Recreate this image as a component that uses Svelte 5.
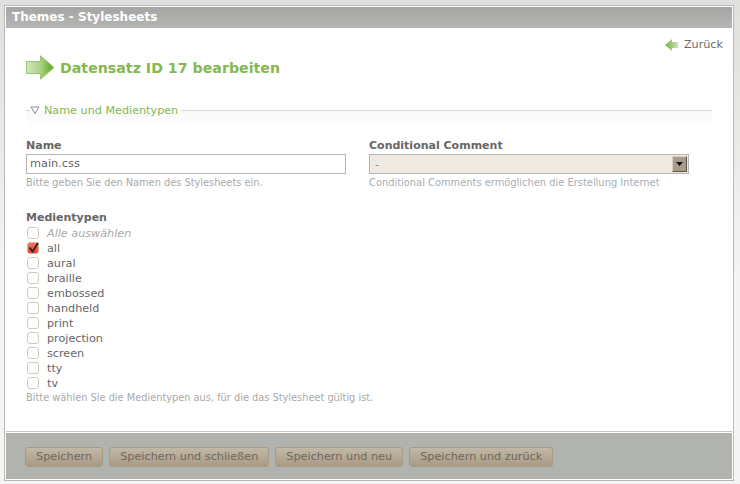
<script>
  const media = ["aural", "braille", "embossed", "handheld", "print", "projection", "screen", "tty", "tv"];
  const buttons = ["Speichern", "Speichern und schließen", "Speichern und neu", "Speichern und zurück"];
</script>

<div class="page">
  <div class="panel">
    <div class="title">Themes - Stylesheets</div>
    <div class="body">
      <div class="back">
        <svg width="13" height="12" viewBox="0 0 13 12">
          <defs>
            <linearGradient id="bk" x1="0" x2="1" y1="0" y2="0">
              <stop offset="0" stop-color="#6fb23e" />
              <stop offset="1" stop-color="#cfe3b8" />
            </linearGradient>
          </defs>
          <path d="M0 6 L7 0 V3 H13 V9 H7 V12 Z" fill="url(#bk)" />
        </svg>
        <span>Zurück</span>
      </div>

      <div class="heading">
        <svg width="29" height="25" viewBox="0 0 29 25">
          <defs>
            <linearGradient id="ar" x1="0" x2="1" y1="0" y2="0">
              <stop offset="0" stop-color="#d4e6bf" />
              <stop offset="0.55" stop-color="#a6cf7e" />
              <stop offset="0.85" stop-color="#6fb332" />
            </linearGradient>
          </defs>
          <path d="M0.5 6.5 H14.5 V0.8 L28 12.5 L14.5 24.2 V18.5 H0.5 Z" fill="url(#ar)" stroke="#9cc474" stroke-width="1" />
        </svg>
        <h1>Datensatz ID 17 bearbeiten</h1>
      </div>

      <div class="legend">
        <span class="dash"></span>
        <svg width="10" height="8" viewBox="0 0 10 8"><path d="M1 1 H9 L5 7.5 Z" fill="none" stroke="#8a8a8a" stroke-width="1" /></svg>
        <span class="legend-text">Name und Medientypen</span>
        <span class="rule"></span>
      </div>
      <div class="fade"></div>

      <div class="columns">
        <div class="col-name">
          <div class="label">Name</div>
          <div class="input">main.css</div>
          <div class="hint">Bitte geben Sie den Namen des Stylesheets ein.</div>
        </div>
        <div class="col-comment">
          <div class="label">Conditional Comment</div>
          <div class="select">
            <span>-</span>
            <span class="drop"><svg width="7" height="4" viewBox="0 0 7 4"><path d="M0 0 H7 L3.5 4 Z" fill="#111" /></svg></span>
          </div>
          <div class="hint blue">Conditional Comments ermöglichen die Erstellung Internet</div>
        </div>
      </div>

      <div class="label media-label">Medientypen</div>
      <div class="row">
        <span class="box"></span>
        <span class="all">Alle auswählen</span>
      </div>
      <div class="row">
        <span class="box on">
          <svg width="11" height="11" viewBox="0 0 11 11"><path d="M1.5 5.5 L4.5 9.5 L10 1" fill="none" stroke="#222" stroke-width="1.7" /></svg>
        </span>
        <span>all</span>
      </div>
      {#each media as m}
        <div class="row">
          <span class="box"></span>
          <span>{m}</span>
        </div>
      {/each}
      <div class="hint last">Bitte wählen Sie die Medientypen aus, für die das Stylesheet gültig ist.</div>
    </div>
    <div class="footer">
      {#each buttons as b}
        <div class="btn">{b}</div>
      {/each}
    </div>
  </div>
</div>

<style>
  :global(body) {
    margin: 0;
  }

  .page {
    width: 740px;
    height: 484px;
    box-sizing: border-box;
    padding: 5px 6px 3px 4px;
    background: linear-gradient(#dfe0dd, #f5f5f5 60%);
    font-family: "DejaVu Sans", sans-serif;
    font-size: 11.2px;
    color: #666;
  }

  .panel {
    height: 100%;
    box-sizing: border-box;
    border: 1px solid #b8b8b8;
    padding: 1px;
    background: #fff;
    display: flex;
    flex-direction: column;
  }

  .title {
    height: 21px;
    line-height: 20px;
    padding-left: 6px;
    background: linear-gradient(#a5a6a3, #b5b6b3);
    color: #fff;
    font-size: 12px;
    font-weight: bold;
  }

  .body {
    flex: 1;
    padding: 0 20px;
    border-bottom: 1px solid #c4c4c4;
  }

  .back {
    display: flex;
    justify-content: flex-end;
    align-items: center;
    gap: 6px;
    margin-right: -11px;
    padding-top: 10px;
    height: 13px;
    line-height: 13px;
    color: #6b6b6b;
  }

  .heading {
    display: flex;
    align-items: center;
    gap: 5px;
    margin-top: 4px;
    height: 25px;
  }

  h1 {
    margin: 0;
    font-size: 14.2px;
    font-weight: bold;
    color: #85b84f;
  }

  .legend {
    display: flex;
    align-items: center;
    margin-top: 23px;
    height: 14px;
  }

  .dash {
    width: 4px;
    height: 1px;
    background: #d8d8d8;
    margin-right: 0;
  }

  .legend-text {
    color: #85b84f;
    margin: 0 3px 0 4px;
  }

  .rule {
    flex: 1;
    height: 1px;
    background: #d8d8d8;
  }

  .fade {
    height: 20px;
    margin-top: -6px;
    background: linear-gradient(#f9f9f9, #fff);
  }

  .columns {
    display: flex;
    margin-top: 8px;
  }

  .col-name {
    width: 343px;
  }

  .label {
    font-size: 11px;
    font-weight: bold;
    color: #666;
    line-height: 14px;
  }

  .input {
    width: 320px;
    height: 20px;
    margin-top: 1px;
    box-sizing: border-box;
    border: 1px solid #b4b4b4;
    line-height: 18px;
    padding-left: 3px;
    font-size: 11.3px;
    color: #666;
  }

  .select {
    width: 320px;
    height: 20px;
    margin-top: 1px;
    box-sizing: border-box;
    border: 1px solid #b4b4b4;
    background: #efebe3;
    padding: 0 1px 0 5px;
    display: flex;
    justify-content: space-between;
    align-items: center;
    color: #888;
  }

  .drop {
    width: 15px;
    height: 16px;
    box-sizing: border-box;
    background: #a89c8b;
    border: 1px solid #d8d2c6;
    border-right-color: #5a5346;
    border-bottom-color: #5a5346;
    display: flex;
    align-items: center;
    justify-content: center;
  }

  .hint {
    color: #a9a9a9;
    font-size: 9.8px;
    line-height: 13px;
    margin-top: 2px;
  }

  .hint.blue {
    color: #a8adb5;
    font-size: 9.9px;
  }

  .media-label {
    margin-top: 22px;
    margin-bottom: 1px;
  }

  .row {
    display: flex;
    align-items: center;
    gap: 8px;
    height: 15px;
    line-height: 15px;
    color: #666;
  }

  .box {
    width: 12px;
    height: 12px;
    margin: 0 0 1px 1px;
    box-sizing: border-box;
    border: 1px solid #d4cabb;
    border-radius: 3px;
    background: #fff;
    position: relative;
  }

  .box.on {
    background: linear-gradient(#f8745c, #e9432a);
    border-color: #d8b0a4;
  }

  .box.on svg {
    position: absolute;
    left: 0;
    top: -1px;
  }

  .all {
    color: #a9a9a9;
    font-style: italic;
  }

  .hint.last {
    margin-top: 0;
  }

  .footer {
    height: 47px;
    box-sizing: border-box;
    background: #b1b3af;
    border-top: 1px solid #fff;
    padding: 14px 19px 0;
    display: flex;
    gap: 6px;
  }

  .btn {
    height: 20px;
    box-sizing: border-box;
    padding: 0 10px;
    font-size: 11.25px;
    line-height: 18px;
    border: 1px solid #a69a86;
    border-radius: 3px;
    background: linear-gradient(#c2b8a7, #a99b86);
    color: #6f675a;
  }
</style>
